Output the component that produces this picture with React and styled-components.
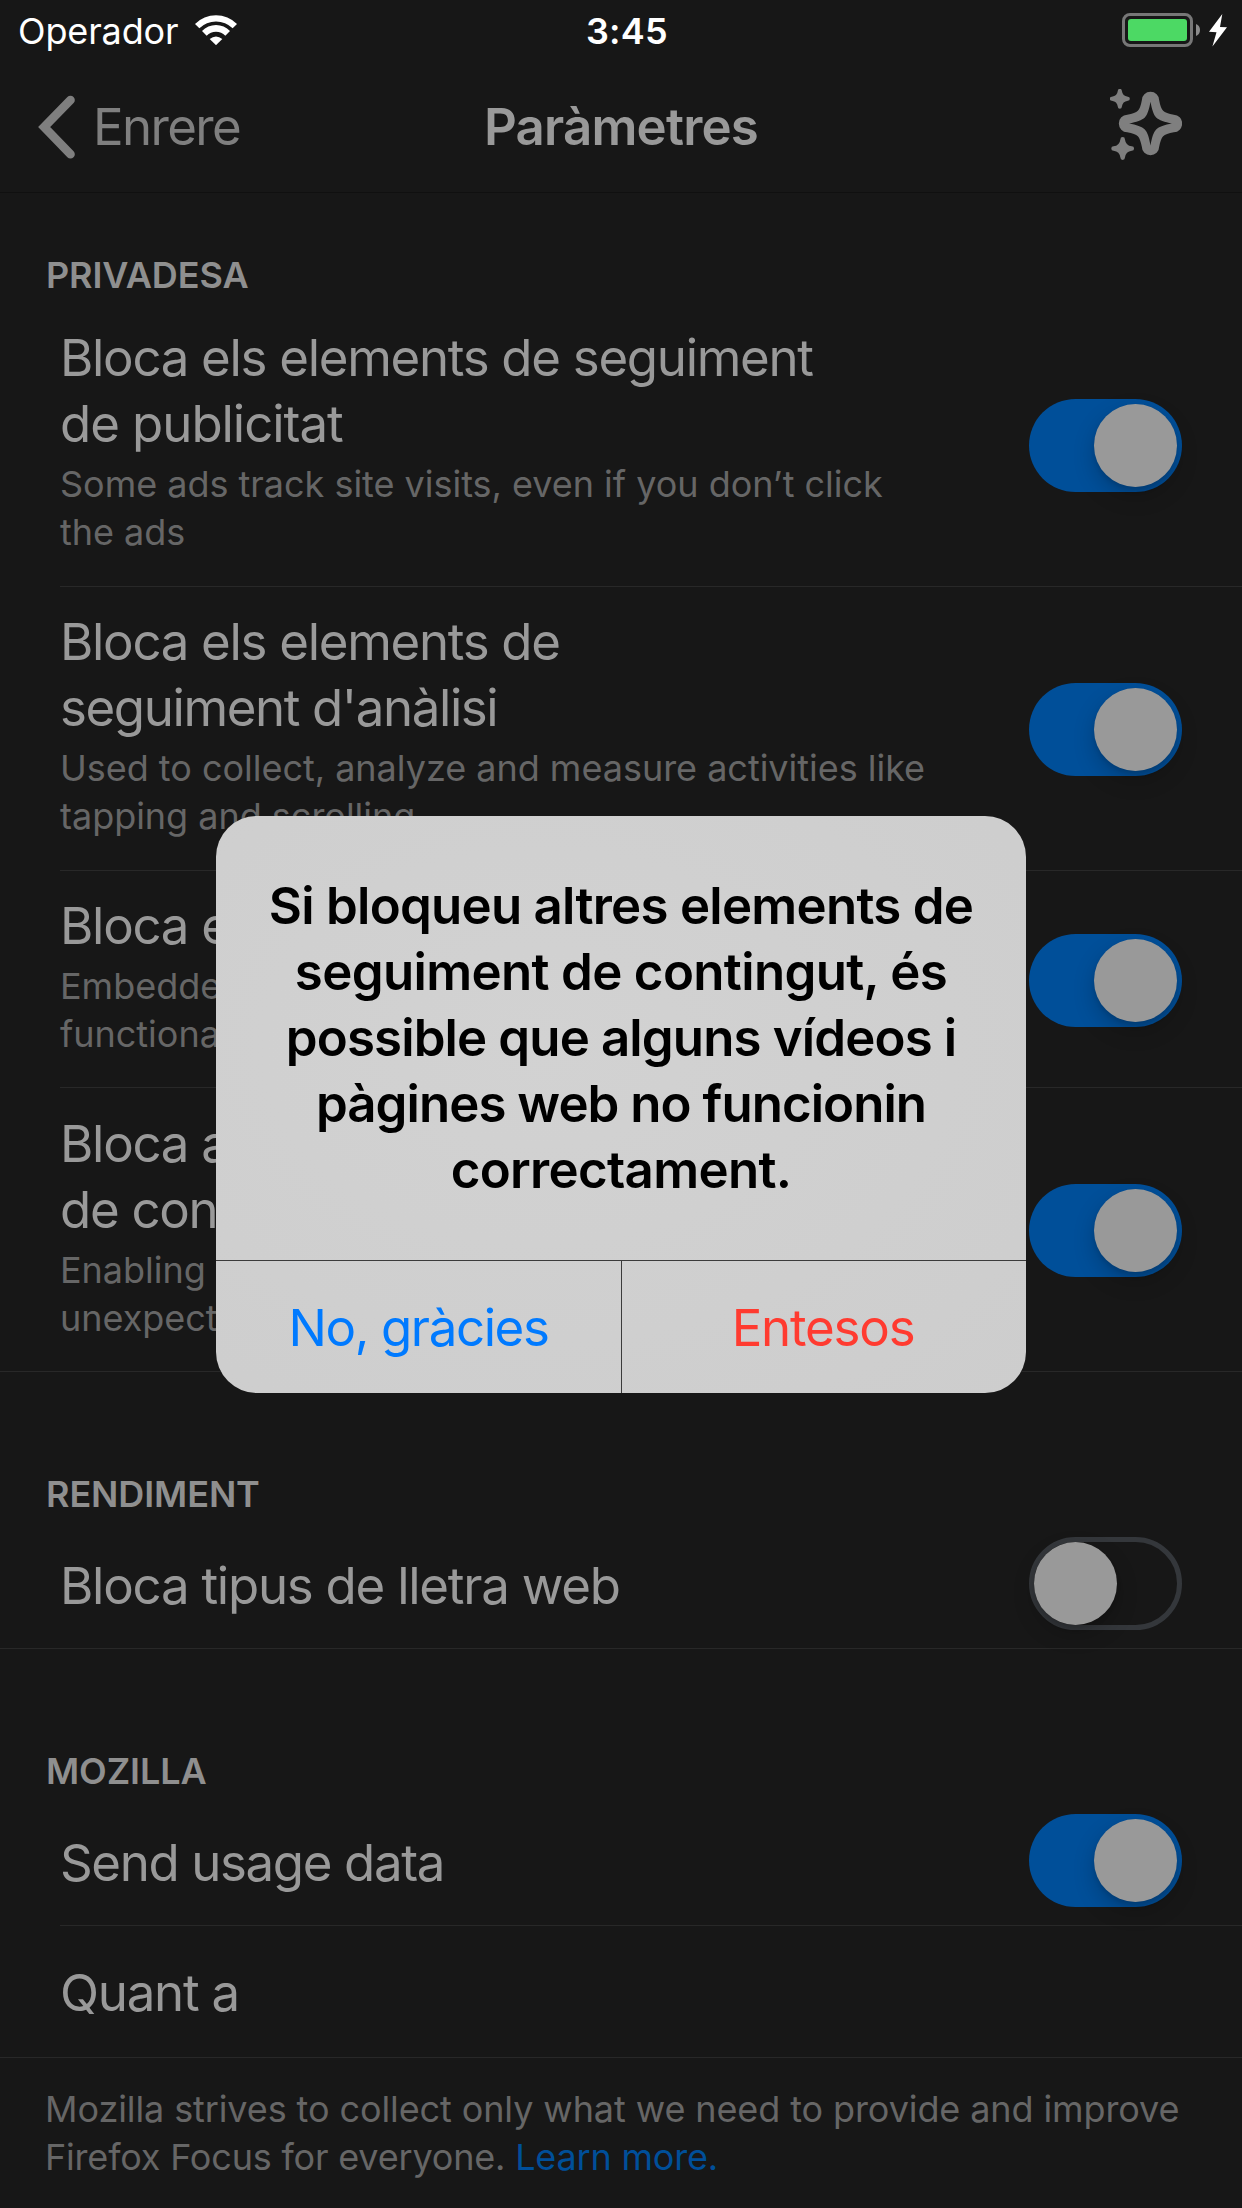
import React from 'react';
import styled, { createGlobalStyle, css } from 'styled-components';

const GlobalStyle = createGlobalStyle`
  *, *::before, *::after { box-sizing: border-box; }
  body {
    margin: 0;
    background: #171717;
    font-family: Inter, 'Liberation Sans', sans-serif;
  }
`;

const Screen = styled.main`
  position: relative;
  width: 1242px;
  height: 2208px;
  overflow: hidden;
  display: flex;
  flex-direction: column;
  background: #171717;
`;

const StatusBar = styled.header`
  flex: none;
  height: 60px;
  display: grid;
  grid-template-columns: 586px 1fr auto;
  align-items: center;
  padding: 0 14px 0 0;
  color: #fff;
  font-size: 36px;
  line-height: 58px;
`;

const Carrier = styled.div`
  display: flex;
  align-items: center;
  gap: 17px;
  padding-left: 18px;
`;

const CarrierName = styled.span`
  padding-top: 2px;
  letter-spacing: -0.14px;
`;

const Clock = styled.time`
  padding-top: 2px;
  font-weight: 600;
  letter-spacing: 0.2px;
`;

const Power = styled.div`
  display: flex;
  align-items: center;
`;

const NavBar = styled.nav`
  flex: none;
  height: 133px;
  display: grid;
  grid-template-columns: 1fr auto 1fr;
  align-items: center;
  padding: 2px 60px 0 38px;
  border-bottom: 1px solid #101010;
  font-size: 51px;
  line-height: 66px;
`;

const BackButton = styled.a`
  display: flex;
  align-items: center;
  gap: 18px;
  color: #7f7f7f;
  letter-spacing: -1.65px;
`;

const NavTitle = styled.h1`
  margin: 0 -22px 0 0;
  font-size: inherit;
  font-weight: 600;
  letter-spacing: -0.8px;
  color: #999;
`;

const NavAction = styled.span`
  display: flex;
  justify-self: end;
  padding-bottom: 5px;
`;

const SectionHeader = styled.h2`
  flex: none;
  margin: 0;
  height: ${(p) => p.$height}px;
  padding: 0 46px ${(p) => p.$bottom}px;
  display: flex;
  align-items: flex-end;
  font-size: 36px;
  font-weight: 600;
  line-height: 48px;
  letter-spacing: -0.1px;
  color: #8f8f8f;
`;

const Row = styled.div`
  flex: none;
  height: ${(p) => p.$height}px;
  display: flex;
  justify-content: space-between;
  align-items: center;
  padding-right: 60px;
  border-bottom: 1px solid #282828;
  ${(p) =>
    p.$inset
      ? css`
          margin-left: 60px;
        `
      : css`
          padding-left: 60px;
        `}
`;

const RowText = styled.div`
  display: flex;
  flex-direction: column;
  gap: 3px;
  white-space: nowrap;
  padding-bottom: ${(p) => p.$bottom}px;
  padding-top: ${(p) => p.$top}px;
`;

const RowTitle = styled.div`
  font-size: 51px;
  line-height: 66px;
  letter-spacing: ${(p) => p.$tracking}px;
  color: #999;
`;

const RowDetail = styled.div`
  font-size: 36px;
  line-height: 48px;
  letter-spacing: -0.02px;
  color: #666;
`;

const Track = styled.span`
  flex: none;
  width: 153px;
  height: 93px;
  margin-top: ${(p) => p.$drop}px;
  padding: ${(p) => (p.$on ? 5 : 0)}px;
  border: ${(p) => (p.$on ? '0' : '5px solid #34373b')};
  border-radius: 47px;
  display: flex;
  justify-content: ${(p) => (p.$on ? 'flex-end' : 'flex-start')};
  background: ${(p) => (p.$on ? '#004f99' : 'transparent')};
`;

const Knob = styled.span`
  width: 83px;
  height: 83px;
  border-radius: 50%;
  background: #999;
  box-shadow: 0 9px 22px rgba(0, 0, 0, 0.2), 0 3px 4px rgba(0, 0, 0, 0.1);
`;

const Footnote = styled.p`
  margin: 0;
  padding: 27px 45px 0;
  font-size: 36px;
  line-height: 48px;
  color: #666;
`;

const FootLine = styled.span`
  display: block;
  white-space: nowrap;
  letter-spacing: ${(p) => p.$tracking}px;
`;

const FootLink = styled.a`
  color: #004f99;
`;

const Alert = styled.div`
  position: absolute;
  left: 216px;
  top: 816px;
  width: 810px;
  height: 577px;
  display: flex;
  flex-direction: column;
  overflow: hidden;
  border-radius: 41px;
  background: radial-gradient(ellipse at 40% 40%, #d2d2d2, #cdcdcd);
`;

const AlertMessage = styled.div`
  flex: 1;
  padding-top: 57px;
  text-align: center;
  font-size: 51px;
  font-weight: 600;
  line-height: 66px;
  color: #000;
`;

const AlertLine = styled.div`
  white-space: nowrap;
  letter-spacing: ${(p) => p.$tracking}px;
`;

const AlertActions = styled.div`
  flex: none;
  height: 133px;
  display: grid;
  grid-template-columns: 405px 405px;
  border-top: 1px solid #3b3b3b;
`;

const AlertButton = styled.button`
  padding: 2px 0 0;
  border: 0;
  background: none;
  font: 400 51px/66px Inter, 'Liberation Sans', sans-serif;
  letter-spacing: -1.4px;
  color: ${(p) => (p.$destructive ? '#ff3b30' : '#007aff')};

  & + & {
    padding-right: 2px;
    border-left: 1px solid #3b3b3b;
    letter-spacing: -1.2px;
  }
`;

const WifiIcon = () => (
  <svg width="42" height="30" viewBox="585 44 126 90" fill="#fff">
    <path d="M585 71A89 89 0 0 1 711 71L698 84A71 71 0 0 0 598 84Z" />
    <path d="M606 92A58 58 0 0 1 690 92L676 106A39 39 0 0 0 620 106Z" />
    <path d="M629 116Q648 101 667 116L648 134.500Z" />
  </svg>
);

const BatteryIcon = () => (
  <svg width="106" height="34" viewBox="0 0 106 34">
    <rect x="1.500" y="1.500" width="68" height="31" rx="6.500" fill="none" stroke="#777" strokeWidth="3" />
    <rect x="6" y="6" width="59" height="22" rx="3" fill="#4cd964" />
    <path d="M74 11Q78 12.500 78 17T74 23Z" fill="#8b8b8b" />
    <path d="M100.300 1L87 18.800L94.500 19.300L90.400 33.600L105 14.300L98 13.900Z" fill="#fff" />
  </svg>
);

const BackIcon = () => (
  <svg width="37" height="64" viewBox="114 283 111 192" fill="none">
    <path d="M211.500 298L132.500 379L211.500 460.500" stroke="#7f7f7f" strokeWidth="26" strokeLinecap="round" />
  </svg>
);

const SparklesIcon = () => (
  <svg width="72" height="71" viewBox="270 267 216 213" fill="#7f7f7f">
    <g transform="translate(391.500 370.500)">
      <path
        fillRule="evenodd"
        d="M-26 -70A26 25 0 0 1 26 -70C29 -54 33 -43 38 -38C43 -33 54 -29 70 -26A25 26 0 0 1 70 26C54 29 43 33 38 38C33 43 29 54 26 70A26 25 0 0 1 -26 70C-29 54 -33 43 -38 38C-43 33 -54 29 -70 26A25 26 0 0 1 -70 -26C-54 -29 -43 -33 -38 -38C-33 -43 -29 -54 -26 -70Z
        M0 -65C-4 -43 -9 -26 -17 -18C-25 -10 -43 -4 -64 0C-43 4 -25 10 -17 18C-9 26 -4 43 0 66C4 43 9 26 17 18C25 10 43 4 64 0C43 -4 25 -10 17 -18C9 -26 4 -43 0 -65Z"
      />
    </g>
    <g transform="translate(299.500 296.500)">
      <path d="M-6 -24A6 6 0 0 1 6 -24Q8 -8 24 -6A6 6 0 0 1 24 6Q8 8 6 24A6 6 0 0 1 -6 24Q-8 8 -24 6A6 6 0 0 1 -24 -6Q-8 -8 -6 -24Z" />
    </g>
    <g transform="translate(308 445.500) scale(1.140)">
      <path d="M-6 -24A6 6 0 0 1 6 -24Q8 -8 24 -6A6 6 0 0 1 24 6Q8 8 6 24A6 6 0 0 1 -6 24Q-8 8 -24 6A6 6 0 0 1 -24 -6Q-8 -8 -6 -24Z" />
    </g>
  </svg>
);

const Toggle = ({ on, drop }) => (
  <Track role="switch" aria-checked={on} $on={on} $drop={drop}>
    <Knob />
  </Track>
);

const sections = [
  {
    title: 'PRIVADESA',
    height: 110,
    bottom: 4,
    rows: [
      {
        title: [
          ['Bloca els elements de seguiment', -1.3],
          ['de publicitat', -1.06],
        ],
        detail: ['Some ads track site visits, even if you don’t click', 'the ads'],
        height: 284,
        on: true,
      },
      {
        title: [
          ['Bloca els elements de', -1.3],
          ["seguiment d'anàlisi", -1.4],
        ],
        detail: ['Used to collect, analyze and measure activities like', 'tapping and scrolling'],
        height: 284,
        on: true,
      },
      {
        title: [['Bloca e', -1.28]],
        detail: ['Embedde', 'functiona'],
        height: 217,
        on: true,
        drop: 3,
      },
      {
        title: [
          ['Bloca a', -1.28],
          ['de con', -1.28],
        ],
        detail: ['Enabling', 'unexpect'],
        height: 284,
        on: true,
        bottom: 6,
      },
    ],
  },
  {
    title: 'RENDIMENT',
    height: 146,
    bottom: 0,
    rows: [{ title: [['Bloca tipus de lletra web', -1.25]], height: 131, on: false, top: 5 }],
  },
  {
    title: 'MOZILLA',
    height: 146,
    bottom: 0,
    rows: [
      { title: [['Send usage data', -1.38]], height: 131, on: true, top: 5 },
      { title: [['Quant a', -1.25]], height: 132, top: 3 },
    ],
  },
];

const SettingRow = ({ row, inset }) => (
  <Row $height={row.height} $inset={inset}>
    <RowText $top={row.top ?? 0} $bottom={row.bottom ?? (row.detail ? 8 : 0)}>
      <div>
        {row.title.map(([line, tracking]) => (
          <RowTitle key={line} $tracking={tracking}>
            {line}
          </RowTitle>
        ))}
      </div>
      {row.detail && (
        <div>
          {row.detail.map((line) => (
            <RowDetail key={line}>{line}</RowDetail>
          ))}
        </div>
      )}
    </RowText>
    {row.on !== undefined && <Toggle on={row.on} drop={row.drop ?? 1} />}
  </Row>
);

const message = [
  ['Si bloqueu altres elements de', -0.74],
  ['seguiment de contingut, és', -0.66],
  ['possible que alguns vídeos i', -0.87],
  ['pàgines web no funcionin', -0.96],
  ['correctament.', -0.69],
];

export default function App() {
  return (
    <>
      <GlobalStyle />
      <Screen>
        <StatusBar>
          <Carrier>
            <CarrierName>Operador</CarrierName>
            <WifiIcon />
          </Carrier>
          <Clock>3:45</Clock>
          <Power>
            <BatteryIcon />
          </Power>
        </StatusBar>
        <NavBar>
          <BackButton>
            <BackIcon />
            Enrere
          </BackButton>
          <NavTitle>Paràmetres</NavTitle>
          <NavAction>
            <SparklesIcon />
          </NavAction>
        </NavBar>
        {sections.map((section) => (
          <React.Fragment key={section.title}>
            <SectionHeader $height={section.height} $bottom={section.bottom}>
              {section.title}
            </SectionHeader>
            {section.rows.map((row, i) => (
              <SettingRow key={row.title[0][0]} row={row} inset={i < section.rows.length - 1} />
            ))}
          </React.Fragment>
        ))}
        <Footnote>
          <FootLine $tracking={-0.1}>
            Mozilla strives to collect only what we need to provide and improve
          </FootLine>
          <FootLine $tracking={-0.19}>
            Firefox Focus for everyone. <FootLink>Learn more.</FootLink>
          </FootLine>
        </Footnote>
        <Alert role="alertdialog">
          <AlertMessage>
            {message.map(([text, tracking]) => (
              <AlertLine key={text} $tracking={tracking}>
                {text}
              </AlertLine>
            ))}
          </AlertMessage>
          <AlertActions>
            <AlertButton>No, gràcies</AlertButton>
            <AlertButton $destructive>Entesos</AlertButton>
          </AlertActions>
        </Alert>
      </Screen>
    </>
  );
}
